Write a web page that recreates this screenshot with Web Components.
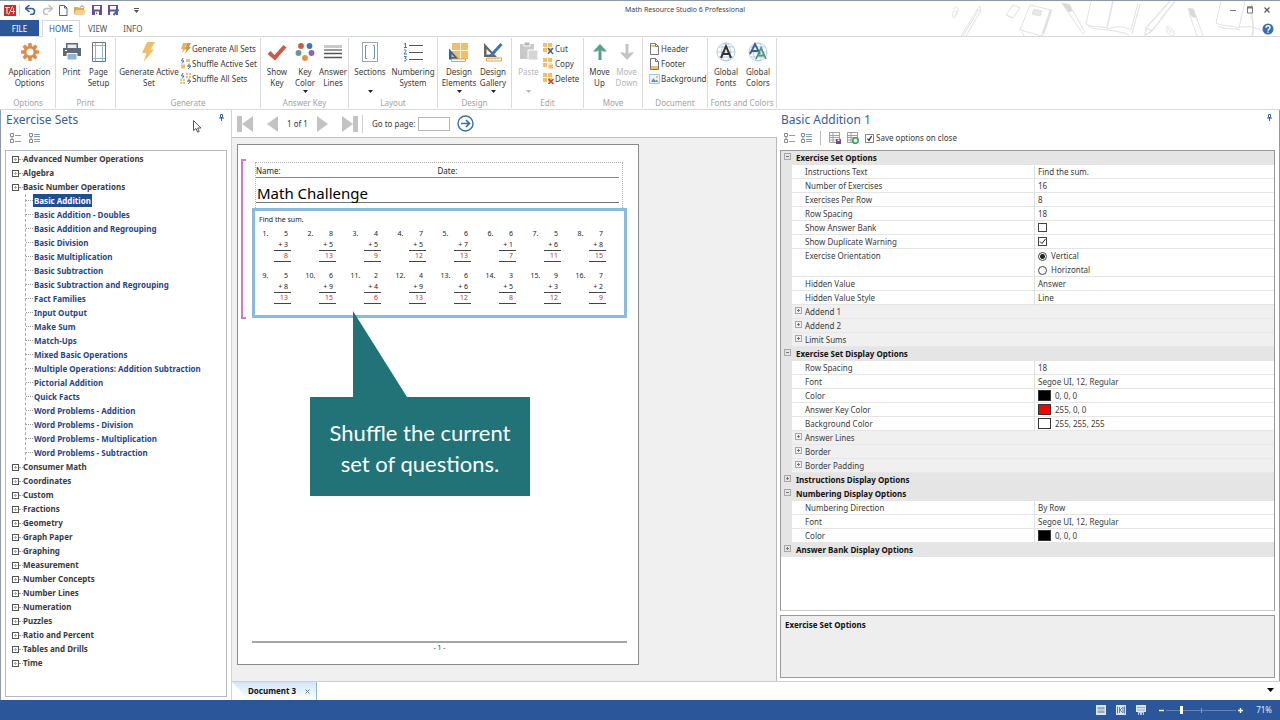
<!DOCTYPE html>
<html lang="en">
<head>
<meta charset="utf-8">
<meta name="viewport" content="width=device-width, initial-scale=1">
<title>Math Resource Studio 6 Professional</title>
<style>
  html, body { margin: 0; height: 100%; }
  body { font: 8px/14px "Noto Sans", "Open Sans", sans-serif; color: #3b3b3b; background: #fff; }
</style>
</head>
<body>
<studio-app></studio-app>

<script>
/* ---------- icons: [width, height, svg content] ---------- */
const DOC = '<path d="M1.5.5h5l3 3v8h-8z" fill="#fff" stroke="#777"/><path d="M6.5.5v3h3" fill="none" stroke="#777"/>';
const TOOTH = Array.from({ length: 8 }, (_, i) =>
  `<path d="M8.500 1h3l.6 4h-4.200z" transform="rotate(${i * 45} 10 10)"/>`).join('');
const BOLT = '<path d="M8 0h8l-4.500 7.500H15L4.500 20 7.500 11H3z" fill="#f0bd6a"/>';
const GLOBE = '<g fill="none" stroke="#b4cbe4"><circle cx="10" cy="10" r="9"/><ellipse cx="10" cy="10" rx="4.500" ry="9"/><path d="M1 10h18M3 5h14M3 15h14"/></g>';
const SQ4 = '<path d="M0 0h4v4H0zM5 0h4v4H5zM0 5h4v4H0zM5 5h4v4H5z" fill="#efc069"/>';
const LISTBOX = '<path d="M.5.5h3v3h-3zM.5 6.500h3v3h-3z" fill="#fff" stroke="#8a8a8a"/><path d="M2 3.500v3" stroke="#8a8a8a"/>';
const ICONS = {
  logo: [12, 11, '<path d="M0 0h12v11H0z" fill="#c62f2b"/><path d="M1 2.500h5M3 2.500V9M8.500 1.500L4.500 9.500M7 6.500h4M9.500 3v6" stroke="#fff" fill="none"/>'],
  undo: [11, 10, '<path d="M1 3.500h5.500a3 3 0 0 1 0 6H5" fill="none" stroke="#2f5f9e" stroke-width="1.600"/><path d="M4.500 0L.500 3.500 4.500 7" fill="none" stroke="#2f5f9e" stroke-width="1.600"/>'],
  redo: [11, 10, '<path d="M10 3.500H4.500a3 3 0 0 0 0 6H6" fill="none" stroke="#bdbdbd" stroke-width="1.400"/><path d="M6.500 0l4 3.500-4 3.500" fill="none" stroke="#bdbdbd" stroke-width="1.400"/>'],
  newdoc: [9, 11, '<path d="M.5.5h5l2.500 2.500v7.500H.5z" fill="#fff" stroke="#666"/><path d="M5.500.5V3H8" fill="none" stroke="#666"/>'],
  open: [12, 10, '<path d="M0 2h4l1 1h5v6H0z" fill="#e3a94c"/><path d="M2 5h10l-2 5H0z" fill="#f5cf8c"/><path d="M6 2.500c1-2 3-2 4 0" stroke="#3f76b5" fill="none"/>'],
  save: [10, 10, '<path d="M0 0h10v10H0z" fill="#6d4c8f"/><path d="M2 1h6v3.500H2zM3 6.500h4V10H3z" fill="#fff"/><path d="M4 7.500h1V9H4z" fill="#6d4c8f"/>'],
  saveas: [12, 11, '<path d="M0 0h10v10H0z" fill="#6d4c8f"/><path d="M2 1h6v3.500H2zM2 6.500h6V10H2z" fill="#fff"/><path d="M10.500 4.500L5.500 10" stroke="#2f6db5" stroke-width="2"/>'],
  more: [5, 5, '<path d="M0 .5h5" stroke="#555"/><path d="M0 2h5L2.500 5z" fill="#555"/>'],
  down: [5, 3, '<path d="M0 0h5L2.500 3z" fill="currentColor"/>'],
  menu: [7, 4, '<path d="M0 0h7L3.500 4z" fill="#000"/>'],
  min: [6, 10, '<path d="M0 5.500h6" stroke="#777"/>'],
  max: [6, 10, '<path d="M.5 2h5v6h-5z" fill="#fff" stroke="#777"/><path d="M0 2.500h6" stroke="#777" stroke-width="2"/>'],
  close: [6, 10, '<path d="M.5 2.500l5 5M5.500 2.500l-5 5" stroke="#555" stroke-width="1.200"/>'],
  help: [12, 12, '<circle cx="6" cy="6" r="5.500" fill="#3a6fae"/><path d="M4 4.700c0-2.600 4-2.600 4 0 0 1.500-2 1.300-2 3M6 8.600v1.200" fill="none" stroke="#fff" stroke-width="1.300"/>'],
  gear: [20, 20, `<g fill="#e18a4b">${TOOTH}</g><circle cx="10" cy="10" r="4.800" fill="#fff" stroke="#e18a4b" stroke-width="2.600"/>`],
  print: [20, 20, '<path d="M4 1h12v6H4z" fill="#5f6a75"/><path d="M5.500 2.500h9V7h-9z" fill="#e8edf2"/><path d="M1 6h18v8h-4v-3H5v3H1z" fill="#5f6a75"/><path d="M5 11.500h10V18H5z" fill="#8fb2d8" stroke="#fff"/><path d="M3 8.500h2" stroke="#fff"/>'],
  pagesetup: [20, 20, '<path d="M3.500.5h13v19h-13z" fill="#fff" stroke="#6b7178"/><path d="M6.500 1v18M13.500 1v18M4 3.500h12M4 16.500h12" stroke="#8fb2d2" fill="none"/>'],
  bolt: [20, 20, BOLT],
  boltall: [11, 11, '<path d="M3 0h4L5 4h2L2 10l1-4H1z" fill="#efb04e"/><path d="M7 0h4L9 4h2L5 11l1.500-4.500H5z" fill="#c99552"/>'],
  shuffle: [11, 11, '<path d="M6 1h4v3H6zM1 6.500h4v4H1z" fill="#efc069"/><path d="M3 0L1.500 3H4L2 5.500M9 5.500v3M7 8h4L8 11" stroke="#2f6db5" fill="none"/>'],
  shuffleall: [11, 11, '<path d="M6 0h2v2H6zM9 0h2v2H9zM6 3h2v2H6zM9 3h2v2H9zM0 6h2v2H0zM3 6h2v2H3zM0 9h2v2H0zM3 9h2v2H3z" fill="#efc069"/><path d="M3 0L1.500 3H4L2 5.500M9 5.500v3M7 8h4L8 11" stroke="#2f6db5" fill="none"/>'],
  check: [20, 20, '<path d="M.5 12L3.500 9l4 4L16.500 3 19.500 5.500 8 18.500z" fill="#cf5a43"/>'],
  keycolor: [20, 20, '<circle cx="6" cy="4" r="2.900" fill="#cf5a43"/><circle cx="14.500" cy="4" r="2.900" fill="#3f76b5"/><circle cx="3.500" cy="11" r="2.900" fill="#5d9e8a"/><circle cx="16.500" cy="11" r="2.900" fill="#8a63b5"/><circle cx="10" cy="16" r="2.900" fill="#e5903f"/>'],
  lines: [20, 20, '<path d="M1 4.500h18" stroke="#c9c9c9" stroke-width="3"/><path d="M1 8h18" stroke="#999" stroke-width="2"/><path d="M1 11.500h18M1 15.500h18" stroke="#555" stroke-width="1.600"/>'],
  sections: [20, 20, '<path d="M2.500.5h15v19h-15z" fill="#fff" stroke="#9aa3ab"/><path d="M7 3.500H5.500v13H7M13 3.500h1.500v13H13" stroke="#6a8fb5" fill="none"/>'],
  numbering: [20, 20, '<path d="M6 3.500h14M6 10.500h14M6 17.500h14" stroke="#555"/><path d="M1 2.500L2.500 1v4.500M1 5.500h3M.800 8.500c1-1.500 3-.5 2 .8L1 12h3M1 14.500h2.500L2 16.500c2.500 0 2 2.800-1 2.500" stroke="#3f76b5" fill="none"/>'],
  design: [20, 20, '<path d="M3 1h16v16H3z" fill="#efc069"/><path d="M11.500 1v16M3 8.500h16" stroke="#fff6df"/><path d="M0 6.500v11h10z" fill="#35629c"/><path d="M2.500 12v3H5.500z" fill="#efc069"/><path d="M2.500 17h14v2.500h-14z" fill="#fff" stroke="#e0a050"/>'],
  gallery: [20, 20, '<path d="M1 1v14h13z" fill="#666"/><path d="M3.500 7v5.500H9z" fill="#fff"/><path d="M18.500 2L8 13.500" stroke="#3f76b5" stroke-width="3"/><path d="M3.500 16h15v3h-15z" fill="#fff" stroke="#e0a050"/><path d="M6 16v1.500M9 16v1.500M12 16v1.500M15 16v1.500" stroke="#e0a050"/>'],
  paste: [20, 20, '<path d="M1 2h14v15H1z" fill="#c9c9c9"/><path d="M5 0h6v4H5z" fill="#b5b5b5" stroke="#fff"/><path d="M9 8h10v10H9z" fill="#d5d5d5" stroke="#fff"/>'],
  cut: [11, 11, SQ4 + '<path d="M5 5l5 6M10 5l-5 6" stroke="#35629c" stroke-width="1.300"/>'],
  copy: [11, 11, SQ4 + '<path d="M5 6h5.500v5H5z" fill="#efc069" stroke="#fff"/>'],
  del: [11, 11, SQ4 + '<path d="M5.500 6l5 5M10.500 6l-5 5" stroke="#c8442f" stroke-width="1.500"/>'],
  up: [20, 20, '<path d="M10 2l7 7.500h-4L11.500 8v10h-3V8L7 9.500H3z" fill="#5d9e8a"/>'],
  downbig: [20, 20, '<path d="M10 18l7-7.500h-4L11.500 12V2h-3v10L7 10.500H3z" fill="#c4c4c4"/>'],
  header: [11, 12, DOC + '<path d="M2 2h4v2H2z" fill="#efc069"/>'],
  footer: [11, 12, DOC + '<path d="M2 8h7v3H2z" fill="#efc069"/>'],
  background: [11, 12, '<path d="M.5 1.500h10v9H.5z" fill="#eef4fa" stroke="#a9c4e2"/><path d="M2 9l2.500-4L7 9z" fill="#5f8fc0"/><path d="M5.500 9l2-2.500L9.500 9z" fill="#5d9e8a"/><circle cx="8" cy="4" r="1" fill="#efb04e"/>'],
  fonts: [20, 20, GLOBE + '<path d="M5 16L10 4l5 12M7 12h6" fill="none" stroke="#333" stroke-width="2"/>'],
  colors: [20, 20, GLOBE + '<path d="M2 12L7 2l5 10M4 9h6" fill="none" stroke="#35629c" stroke-width="1.800"/><path d="M8 17l5-11 5 11M10 13.500h6" fill="none" stroke="#4f9a78" stroke-width="1.800"/>'],
  collapse: [12, 11, LISTBOX + '<path d="M5 2.500h6M5 8.500h6" stroke="#7d9fc0"/>'],
  expand: [12, 11, LISTBOX + '<path d="M5 1.500h6M5 3.500h6M5 6.500h6M5 8.500h6" stroke="#7d9fc0"/>'],
  gridsave: [12, 12, '<path d="M.5.5h10v10H.5zM.5 3.500h10M.5 5.500h10M.5 8h10M4 .5v10" fill="none" stroke="#a0a0a0"/><path d="M7 7h5v5H7z" fill="#6d4c8f"/><path d="M8.500 7.500h2v1.500h-2z" fill="#fff"/>'],
  gridreset: [12, 12, '<path d="M.5.5h10v10H.5zM.5 3.500h10M.5 5.500h10M.5 8h10M4 .5v10" fill="none" stroke="#a0a0a0"/><circle cx="8.500" cy="8.500" r="2.800" fill="#dff0e6" stroke="#3f9a63" stroke-width="1.500"/>'],
  pin: [5, 7, '<path d="M1.500.5h2v3h-2zM0 4h5M2.500 4v3" fill="none" stroke="#35629c"/>'],
  first: [16, 16, '<path d="M0 0h5v16H0zM16 0v16L5 8z" fill="#c3c3c3"/>'],
  prev: [11, 16, '<path d="M11 0v16L0 8z" fill="#c3c3c3"/>'],
  next: [11, 16, '<path d="M0 0v16l11-8z" fill="#c3c3c3"/>'],
  last: [16, 16, '<path d="M11 0h5v16h-5zM0 0v16l11-8z" fill="#c3c3c3"/>'],
  go: [17, 17, '<circle cx="8.500" cy="8.500" r="7.500" fill="#fff" stroke="#3a6fae" stroke-width="1.400"/><path d="M4 8.500h8.500M9 5l3.500 3.500L9 12" fill="none" stroke="#3a6fae" stroke-width="1.700"/>'],
  tabx: [5, 5, '<path d="M.5.5l4 4M4.500.5l-4 4" stroke="#5f7b96"/>'],
  view1: [10, 10, '<path d="M0 0h10v10H0z" fill="#dce6f2"/><path d="M1.500 2h7v2.500h-7zM1.500 5.500h7V8h-7z" fill="#8ea9cb"/>'],
  view2: [10, 10, '<path d="M0 0h10v10H0z" fill="#dce6f2"/><path d="M1.500 1.500v7M8.500 1.500v7M3.500 2v6M4 5l3-3v6z" stroke="#5f82b2" fill="none"/>'],
  view3: [10, 10, '<path d="M0 0h10v7H0z" fill="#dce6f2"/><path d="M1 2.500h8M1 5h8" stroke="#8ea9cb"/><path d="M2 7h6v3H2z" fill="#b9c9de"/><path d="M3.500 8v2M6.500 8v2" stroke="#2b579a"/>'],
  minus: [7, 7, '<path d="M1 3.500h5" stroke="#fff" stroke-width="1.400"/>'],
  plus: [7, 7, '<path d="M1 3.500h5M3.500 1v5" stroke="#fff" stroke-width="1.400"/>'],
  cursor: [9, 13, '<path d="M.5.5v10l2.500-2 1.600 3.700 1.600-.7-1.600-3.500H8z" fill="#fff" stroke="#555"/>'],
  pencils: [330, 35, `<g fill="none" stroke="#e2e2e2">
    <path d="M4 8c2-3 5-1 4 2s-3 9-5 6 2-8 3-6-1 5-1 5"/>
    <path d="M11 35L27 9l3-4 .5 5L16 35M13 35L28 10M27 9l4 1"/>
    <path d="M56 14l7-10 7 3-7 10zM56 14l7 3"/>
    <path d="M80 4l21 5-9 26-22-6zM72 31l2 4"/><path d="M84 8l8 2-2 5-8-2z" fill="#e8e8e8"/><path d="M93 33l8-24" stroke-width="2.500"/>
    <path d="M113 3l6 0 16 28-2 2-15-22z"/><path d="M112 2l8 2 2 6-4 1z" fill="#d8d8d8"/>
    <path d="M141 0l-5 23c8 5 18 1 22 5 8-4 18-2 23 1l7-27M138 25c6 4 14 3 20 4s15 2 21 5M190 3l-8 30"/><path d="M157 27L163 0" stroke-width="1.500"/>
    <path d="M220 0l-24 27-1 7 7-4 23-30M196 27l6 3" stroke-width="1.300"/>
    <path d="M216 26c5-2 9 6 8 8s-5 1-7-4 4-2 4 2"/>
    <path d="M238 8l5-1 10 28M239 12l8 23"/><path d="M238 7l6 2 2 8-5-2z" fill="#d8d8d8"/>
    <path d="M271 0l-5 22c8 4 16 2 22 5 8-3 18-1 25 3M289 27l6-27M268 25c8 4 15 2 22 4"/><path d="M302 3c-3 10 4 20 0 32" stroke-width="1.500"/></g>`],
};

/* ---------- base class ---------- */
class Base extends HTMLElement {
  constructor() { super(); this.attachShadow({ mode: 'open' }); }
  connectedCallback() {
    this.shadowRoot.innerHTML = `<style>
      *, *::before, *::after { box-sizing: border-box; }
      button { font: inherit; color: inherit; background: none; border: 0; padding: 0; margin: 0; }
      ${this.css()}</style>${this.html()}`;
  }
  css() { return ''; }
  html() { return '<slot></slot>'; }
}
const icon = name => `<ui-icon name="${name}"></ui-icon>`;

customElements.define('ui-icon', class extends Base {
  css() { return ':host{display:block;flex:none} svg{display:block}'; }
  html() {
    const [w, h, body] = ICONS[this.getAttribute('name')];
    return `<svg width="${w}" height="${h}" viewBox="0 0 ${w} ${h}" aria-hidden="true">${body}</svg>`;
  }
});

/* ---------- title bar and ribbon tabs ---------- */
customElements.define('title-bar', class extends Base {
  css() { return `
    :host { display: flex; align-items: center; height: 20px; padding: 0 10px 0 4px; }
    .quick { display: flex; align-items: center; width: 136px; gap: 6px; }
    .quick i { width: 1px; height: 10px; background: #ccc; margin: 0 -1px 0 -3px; }
    .quick .more { margin-left: 8px; }
    h1 { flex: 1; margin: 0; text-align: center; font-size: 7px; font-weight: 400; color: #444; }
    .win { display: flex; gap: 11px; }`; }
  html() { return `
    <div class="quick">${icon('logo')}<i></i>
      ${['undo:Undo', 'redo:Redo', 'newdoc:New', 'open:Open', 'save:Save', 'saveas:Save As'].map(s => {
        const [n, t] = s.split(':'); return `<button aria-label="${t}">${icon(n)}</button>`; }).join('')}
      <button class="more" aria-label="Customize">${icon('more')}</button></div>
    <h1>Math Resource Studio 6 Professional</h1>
    <div class="win"><button aria-label="Minimize">${icon('min')}</button><button aria-label="Maximize">${icon('max')}</button><button aria-label="Close">${icon('close')}</button></div>`; }
});

customElements.define('ribbon-tabs', class extends Base {
  css() { return `
    :host { display: flex; align-items: stretch; height: 17px; border-bottom: 1px solid #d5d8dc; padding-right: 6px; }
    button { padding: 0 8px; color: #555; height: 17px; line-height: 17px; }
    .file { background: #2b579a; color: #fff; width: 39px; margin-right: 3px; height: 16px; }
    .on { background: #fff; color: #2b579a; border: 1px solid #d5d8dc; border-bottom: 0; padding: 0 6px; line-height: 16px; }
    .help { margin-left: auto; padding: 2px 0; }`; }
  html() { return `
    <button class="file">FILE</button>
    <button class="on" aria-current="page">HOME</button>
    <button>VIEW</button>
    <button>INFO</button>
    <button class="help" aria-label="Help">${icon('help')}</button>`; }
});

/* ---------- ribbon ---------- */
customElements.define('ribbon-group', class extends Base {
  css() { return `
    :host { display: flex; flex-direction: column; flex: none; width: var(--w); height: 70px; border-right: 1px solid #d9dbde; }
    .items { display: flex; flex: 1; padding-left: var(--pad, 2px); }
    .name { text-align: center; line-height: 10px; color: #a3a3a3; white-space: nowrap; }
    ::slotted(div) { display: flex; flex-direction: column; padding-top: 3px; }`; }
  html() { return `<div class="items"><slot></slot></div><div class="name">${this.getAttribute('name')}</div>`; }
});

customElements.define('ribbon-button', class extends Base {
  css() { return `
    :host { display: block; flex: none; width: var(--bw, 27px); }
    button { display: flex; flex-direction: column; align-items: center; width: 100%; height: 58px; padding-top: 4px; }
    button:disabled { color: #b5b5b5; }
    .text { margin-top: 4px; line-height: 11px; height: 22px; text-align: center; white-space: pre; }
    .arrow { margin-top: 2px; color: #222; }
    button:disabled .arrow { color: #b5b5b5; }`; }
  html() { return `<button ${this.hasAttribute('off') ? 'disabled' : ''}>${icon(this.getAttribute('icon'))}
    <span class="text"><slot></slot></span>${this.hasAttribute('menu') ? `<span class="arrow">${icon('down')}</span>` : ''}</button>`; }
});

customElements.define('ribbon-item', class extends Base {
  css() { return `
    :host { display: block; }
    button { display: flex; align-items: center; gap: 1px; height: 15px; white-space: nowrap; }`; }
  html() { return `<button>${icon(this.getAttribute('icon'))}<slot></slot></button>`; }
});

customElements.define('app-ribbon', class extends Base {
  css() { return `
    :host { display: flex; height: 73px; padding: 1px 0 1px 1px; border-bottom: 1px solid #d5d8dc; background: #fff; box-sizing: border-box; }`; }
  html() { return `
    <ribbon-group name="Options" style="--w:55px"><ribbon-button icon="gear" style="--bw:53px">Application\nOptions</ribbon-button></ribbon-group>
    <ribbon-group name="Print" style="--w:60px"><ribbon-button icon="print">Print</ribbon-button><ribbon-button icon="pagesetup">Page\nSetup</ribbon-button></ribbon-group>
    <ribbon-group name="Generate" style="--w:145px"><ribbon-button icon="bolt" style="--bw:62px">Generate Active\nSet</ribbon-button>
      <div><ribbon-item icon="boltall">Generate All Sets</ribbon-item><ribbon-item icon="shuffle">Shuffle Active Set</ribbon-item><ribbon-item icon="shuffleall">Shuffle All Sets</ribbon-item></div></ribbon-group>
    <ribbon-group name="Answer Key" style="--w:88px"><ribbon-button icon="check" style="--bw:28px">Show\nKey</ribbon-button><ribbon-button icon="keycolor" menu style="--bw:28px">Key\nColor</ribbon-button><ribbon-button icon="lines" style="--bw:28px">Answer\nLines</ribbon-button></ribbon-group>
    <ribbon-group name="Layout" style="--w:89px"><ribbon-button icon="sections" menu style="--bw:38px">Sections</ribbon-button><ribbon-button icon="numbering" style="--bw:48px">Numbering\nSystem</ribbon-button></ribbon-group>
    <ribbon-group name="Design" style="--w:74px;--pad:4px"><ribbon-button icon="design" menu style="--bw:34px">Design\nElements</ribbon-button><ribbon-button icon="gallery" menu style="--bw:34px">Design\nGallery</ribbon-button></ribbon-group>
    <ribbon-group name="Edit" style="--w:72px"><ribbon-button icon="paste" off menu style="--bw:29px">Paste</ribbon-button>
      <div><ribbon-item icon="cut">Cut</ribbon-item><ribbon-item icon="copy">Copy</ribbon-item><ribbon-item icon="del">Delete</ribbon-item></div></ribbon-group>
    <ribbon-group name="Move" style="--w:59px"><ribbon-button icon="up">Move\nUp</ribbon-button><ribbon-button icon="downbig" off>Move\nDown</ribbon-button></ribbon-group>
    <ribbon-group name="Document" style="--w:65px;--pad:6px"><div><ribbon-item icon="header">Header</ribbon-item><ribbon-item icon="footer">Footer</ribbon-item><ribbon-item icon="background">Background</ribbon-item></div></ribbon-group>
    <ribbon-group name="Fonts and Colors" style="--w:69px"><ribbon-button icon="fonts" style="--bw:32px">Global\nFonts</ribbon-button><ribbon-button icon="colors" style="--bw:32px">Global\nColors</ribbon-button></ribbon-group>`; }
});

/* ---------- panel heading shared by both side panels ---------- */
customElements.define('panel-head', class extends Base {
  css() { return `
    :host { display: flex; justify-content: space-between; height: 19px; padding: 4px 3px 0 1px; }
    h2 { margin: 0; font-size: 12px; line-height: 12px; font-weight: 400; color: #3a6096; }
    button { height: 7px; }`; }
  html() { return `<h2><slot></slot></h2><button aria-label="Pin">${icon('pin')}</button>`; }
});

/* ---------- exercise tree ---------- */
const TREE = [['Advanced Number Operations'], ['Algebra'], ['Basic Number Operations', [
  'Basic Addition', 'Basic Addition - Doubles', 'Basic Addition and Regrouping', 'Basic Division',
  'Basic Multiplication', 'Basic Subtraction', 'Basic Subtraction and Regrouping', 'Fact Families',
  'Input Output', 'Make Sum', 'Match-Ups', 'Mixed Basic Operations',
  'Multiple Operations: Addition Subtraction', 'Pictorial Addition', 'Quick Facts',
  'Word Problems - Addition', 'Word Problems - Division', 'Word Problems - Multiplication',
  'Word Problems - Subtraction']], ['Consumer Math'], ['Coordinates'], ['Custom'], ['Fractions'],
  ['Geometry'], ['Graph Paper'], ['Graphing'], ['Measurement'], ['Number Concepts'], ['Number Lines'],
  ['Numeration'], ['Puzzles'], ['Ratio and Percent'], ['Tables and Drills'], ['Time']];

customElements.define('exercise-tree', class extends Base {
  css() { return `
    :host { display: block; border: 1px solid #b5b8bc; background: #fff; padding: 1px 0 0 6px; overflow: auto; font-weight: 700; }
    ul { list-style: none; margin: 0; padding: 0; }
    .root { display: flex; align-items: center; height: 14px; }
    .box { width: 7px; height: 7px; border: 1px solid #555; background: linear-gradient(#aaa, #aaa) center/3px 1px no-repeat, linear-gradient(#aaa, #aaa) center/1px 3px no-repeat; }
    .dots { width: 4px; border-top: 1px dotted #999; }
    .root span:last-child { white-space: nowrap; }
    .kids { margin-left: 13px; border-left: 1px dashed #aaa; color: #1f4787; }
    .kids li { display: flex; align-items: flex-start; height: 14px; white-space: nowrap; }
    .kids li::before { content: ""; width: 7px; margin-top: 6px; border-top: 1px dotted #999; }
    .kids span { padding: 0 1px; line-height: 13px; }
    .on span { background: #1f4e92; color: #fff; }`; }
  html() { return `<ul role="tree">${TREE.map(([t, kids]) => `<li role="treeitem">
    <div class="root"><span class="box"></span><span class="dots"></span><span>${t}</span></div>
    ${kids ? `<ul class="kids" role="group">${kids.map((k, i) => `<li role="treeitem"${i ? '' : ' class="on" aria-selected="true"'}><span>${k}</span></li>`).join('')}</ul>` : ''}</li>`).join('')}</ul>`; }
});

customElements.define('exercise-panel', class extends Base {
  css() { return `
    :host { display: flex; flex-direction: column; border-left: 1px solid #8d9aab; border-right: 1px solid #d0d3d6; padding: 0 4px 3px; background: #fff; position: relative; }
    .tools { display: flex; gap: 7px; align-items: center; height: 21px; padding: 0 0 3px 5px; }
    exercise-tree { flex: 1; min-height: 0; }
    .pointer { position: absolute; left: 192px; top: 10px; }`; }
  html() { return `<panel-head>Exercise Sets</panel-head>
    <div class="tools"><button aria-label="Collapse all">${icon('collapse')}</button><button aria-label="Expand all">${icon('expand')}</button></div>
    <exercise-tree></exercise-tree><div class="pointer">${icon('cursor')}</div>`; }
});

/* ---------- document area ---------- */
customElements.define('page-nav', class extends Base {
  css() { return `
    :host { display: flex; align-items: center; height: 28px; border-bottom: 1px solid #bfc2c5; padding-left: 5px; background: #fff; }
    button { flex: none; }
    .prev { margin: 0 9px 0 14px; } .next { margin: 0 14px 0 9px; }
    .bar { width: 1px; height: 18px; background: #d0d0d0; margin: 0 9px 0 4px; }
    input { width: 32px; height: 14px; border: 1px solid #b5b5b5; padding: 0 2px; margin: 0 7px 0 3px; font: inherit; }`; }
  html() { return `
    <button aria-label="First page">${icon('first')}</button>
    <button class="prev" aria-label="Previous page">${icon('prev')}</button>
    <span>1 of 1</span>
    <button class="next" aria-label="Next page">${icon('next')}</button>
    <button aria-label="Last page">${icon('last')}</button><span class="bar"></span>
    <label for="goto">Go to page:</label><input id="goto" type="text">
    <button aria-label="Go">${icon('go')}</button>`; }
});

customElements.define('math-problem', class extends Base {
  css() { return `
    :host { display: flex; gap: 2px; line-height: 11px; color: #222; }
    .n { width: 13px; text-align: center; }
    .work { width: 17px; text-align: right; }
    .work div { padding-right: 3px; }
    .ans { color: #d8222f; border-top: 1px solid #444; border-bottom: 1px solid #444; height: 12px; line-height: 10px; }`; }
  html() {
    const [n, a, b] = ['n', 'a', 'b'].map(k => +this.getAttribute(k));
    return `<span class="n">${n}.</span><div class="work"><div>${a}</div><div>+ ${b}</div><div class="ans">${a + b}</div></div>`;
  }
});

const SUMS = [[5,3],[8,5],[4,5],[7,5],[6,7],[6,1],[5,6],[7,8],[5,8],[6,9],[2,4],[4,9],[6,6],[3,5],[9,3],[7,2]];
customElements.define('work-sheet', class extends Base {
  css() { return `
    :host { display: flex; flex-direction: column; width: 402px; height: 521px; border: 1px solid #8a8a8a; background: #fff; padding: 14px 11px 12px 3px; font-size: 7px; box-sizing: border-box; }
    .section { display: flex; gap: 6px; height: 160px; }
    .bracket { width: 5px; border: 2px solid #cf7cc4; border-right: 0; }
    .body { flex: 1; padding-top: 3px; }
    .head { margin: 0 4px 0 3px; border: 1px dotted #b0b0b0; border-bottom: 0; height: 46px; padding-right: 3px; color: #222; }
    .fields { display: grid; grid-template-columns: 1fr 1fr; height: 15px; line-height: 16px; border-bottom: 1px solid #888; font-size: 8px; }
    h3 { margin: 0; height: 25px; font-size: 15px; line-height: 30px; font-weight: 400; color: #000; padding-left: 1px; border-bottom: 1px solid #777; }
    .set { border: 3px solid #8abbdf; height: 110px; padding: 2px 4px 0; }
    .set p { margin: 0; line-height: 14px; color: #222; }
    .sums { display: grid; grid-template-columns: repeat(8, 45px); row-gap: 8px; padding-top: 1px; }
    footer { margin: auto 0 0 11px; border-top: 2px solid #a5a5a5; text-align: center; line-height: 9px; }`; }
  html() { return `
    <div class="section"><div class="bracket"></div><div class="body">
      <div class="head"><div class="fields"><span>Name:</span><span>Date:</span></div><h3>Math Challenge</h3></div>
      <div class="set"><p>Find the sum.</p><div class="sums">${SUMS.map(([a, b], i) => `<math-problem n="${i + 1}" a="${a}" b="${b}"></math-problem>`).join('')}</div></div>
    </div></div>
    <footer>- 1 -</footer>`; }
});

customElements.define('callout-bubble', class extends Base {
  css() { return `
    :host { position: absolute; left: 78px; top: 259px; width: 220px; padding: 20px 10px 17px; background: #217377; color: #fff; font: 22px/31px Lato, sans-serif; text-align: center; box-sizing: border-box; }
    svg { position: absolute; left: 43px; bottom: 100%; display: block; }`; }
  html() { return `<svg width="54" height="86" viewBox="0 0 54 86" aria-hidden="true"><path d="M0 0v86h54z" fill="#217377"/></svg><slot></slot>`; }
});

customElements.define('document-view', class extends Base {
  css() { return `
    :host { display: flex; flex-direction: column; min-width: 0; }
    .canvas { flex: 1; background: #f0f0f0; padding: 6px 5px; border-right: 1px solid #b5b8bc; position: relative; overflow: hidden; }`; }
  html() { return `<page-nav></page-nav><div class="canvas"><work-sheet></work-sheet>
    <callout-bubble>Shuffle the current<br>set of questions.</callout-bubble></div>`; }
});

customElements.define('document-tabs', class extends Base {
  css() { return `
    :host { display: flex; justify-content: space-between; align-items: flex-start; height: 19px; border-top: 1px solid #bcd6da; background: #fff; padding-right: 6px; box-sizing: border-box; }
    .tab { display: flex; align-items: center; gap: 9px; width: 85px; height: 18px; padding-left: 16px; font-weight: 700; color: #111; border-right: 1px solid #8fb3d9; background: linear-gradient(#d3e5f8, #fff); clip-path: polygon(0 0, 100% 0, 100% 100%, 17px 100%); white-space: nowrap; }
    .menu { padding-top: 6px; }`; }
  html() { return `<div class="tab"><span>Document 3</span><button aria-label="Close Document 3">${icon('tabx')}</button></div>
    <button class="menu" aria-label="Documents">${icon('menu')}</button>`; }
});

/* ---------- option panel ---------- */
const swatch = (c, t) => `<i class="sw" style="background:${c}"></i>${t}`;
const GRID = [
  ['h', 'Exercise Set Options', '-'], ['r', 'Instructions Text', 'Find the sum.'], ['r', 'Number of Exercises', '16'],
  ['r', 'Exercises Per Row', '8'], ['r', 'Row Spacing', '18'],
  ['r', 'Show Answer Bank', '<input type="checkbox" aria-label="Show Answer Bank">'],
  ['r', 'Show Duplicate Warning', '<input type="checkbox" checked aria-label="Show Duplicate Warning">'],
  ['r', 'Exercise Orientation', '<label><input type="radio" name="o" checked>Vertical</label><label><input type="radio" name="o">Horizontal</label>'],
  ['r', 'Hidden Value', 'Answer'], ['r', 'Hidden Value Style', 'Line'],
  ['s', 'Addend 1'], ['s', 'Addend 2'], ['s', 'Limit Sums'],
  ['h', 'Exercise Set Display Options', '-'], ['r', 'Row Spacing', '18'], ['r', 'Font', 'Segoe UI, 12, Regular'],
  ['r', 'Color', swatch('#000', '0, 0, 0')], ['r', 'Answer Key Color', swatch('#f00', '255, 0, 0')],
  ['r', 'Background Color', swatch('#fff', '255, 255, 255')],
  ['s', 'Answer Lines'], ['s', 'Border'], ['s', 'Border Padding'],
  ['h', 'Instructions Display Options', '+'], ['h', 'Numbering Display Options', '-'],
  ['r', 'Numbering Direction', 'By Row'], ['r', 'Font', 'Segoe UI, 12, Regular'], ['r', 'Color', swatch('#000', '0, 0, 0')],
  ['h', 'Answer Bank Display Options', '+']];

customElements.define('property-grid', class extends Base {
  css() { return `
    :host { display: block; border: 1px solid #999; border-bottom-color: #ccc; background: #fff; overflow: auto; }
    table { width: 100%; border-collapse: separate; border-spacing: 0; table-layout: fixed; }
    col.g { width: 11px; } col.k { width: 242px; }
    th, td { padding: 0; height: 14px; line-height: 14px; text-align: left; font-weight: 400; vertical-align: top; white-space: nowrap; }
    .g { background: #e5e5e5; padding: 2px 0 0 3px; }
    .h th, .h .g { background: #e5e5e5; }
    .h th { font-weight: 700; color: #111; padding-left: 4px; }
    .r th, .r td:last-child { background: linear-gradient(#e5e5e5, #e5e5e5) bottom/100% 1px no-repeat; }
    .r th { padding-left: 13px; }
    .r td:last-child { border-left: 1px solid #e0e0e0; padding-left: 3px; }
    .s th { background: linear-gradient(#e8e8e8, #e8e8e8) bottom/100% 1px no-repeat #f0f0f0; }
    .s div { display: flex; gap: 4px; padding: 0 0 0 3px; }
    .x { display: block; flex: none; width: 7px; height: 7px; margin-top: 2px; border: 1px solid #a8a8a8;
      background: linear-gradient(#777, #777) center/3px 1px no-repeat; }
    .g .x { margin: 0; }
    .s div { gap: 3px; }
    .x.plus { background: linear-gradient(#777, #777) center/3px 1px no-repeat, linear-gradient(#777, #777) center/1px 3px no-repeat; }
    label { display: flex; align-items: center; height: 14px; gap: 4px; }
    input { appearance: none; display: block; width: 9px; height: 9px; margin: 2px 0 3px; border: 1px solid #444; background: #fff; }
    input[type=checkbox]:checked { background: #fff url("data:image/svg+xml,%3Csvg xmlns='http://www.w3.org/2000/svg' viewBox='0 0 7 7'%3E%3Cpath d='M1 3.500l2 2L6.500 1' fill='none' stroke='%23222'/%3E%3C/svg%3E") center/7px no-repeat; }
    input[type=radio] { border-radius: 50%; margin: 0; }
    input[type=radio]:checked { background: radial-gradient(#222 2px, #fff 3px); }
    .sw { display: inline-block; width: 13px; height: 11px; border: 1px solid #333; margin: 1px 4px 0 0; vertical-align: top; }`; }
  html() { return `<table><colgroup><col class="g"><col class="k"><col></colgroup><tbody>${GRID.map(([k, a, v]) =>
    k === 'h' ? `<tr class="h"><td class="g"><i class="x ${v === '+' ? 'plus' : ''}"></i></td><th colspan="2" scope="rowgroup">${a}</th></tr>`
    : k === 's' ? `<tr class="s"><td class="g"></td><th colspan="2" scope="row"><div><i class="x plus"></i>${a}</div></th></tr>`
    : `<tr class="r"><td class="g"></td><th scope="row">${a}</th><td>${v}</td></tr>`).join('')}</tbody></table>`; }
});

customElements.define('options-panel', class extends Base {
  css() { return `
    :host { display: flex; flex-direction: column; padding: 0 4px 3px 3px; border-right: 1px solid #8d9aab; background: #fff; }
    .tools { display: flex; align-items: center; height: 21px; padding: 0 0 3px 4px; }
    .tools button { margin-right: 5px; }
    .bar { width: 1px; height: 14px; background: #bbb; margin: 0 8px 0 2px; }
    .tools .grid { margin-right: 6px; }
    label { display: flex; align-items: center; gap: 2px; }
    input { appearance: none; width: 9px; height: 9px; margin: 0; border: 1px solid #888;
      background: url("data:image/svg+xml,%3Csvg xmlns='http://www.w3.org/2000/svg' viewBox='0 0 7 7'%3E%3Cpath d='M1.500 3.500l1.500 2L5.500 1' fill='none' stroke='%23222' stroke-width='1.200'/%3E%3C/svg%3E") center/7px no-repeat; }
    property-grid { flex: 1; min-height: 0; }
    .hint { height: 63px; margin-top: 4px; border: 1px solid #999; background: #eee; padding: 2px 4px; font-weight: 700; color: #111; }`; }
  html() { return `<panel-head>Basic Addition 1</panel-head>
    <div class="tools"><button aria-label="Collapse all">${icon('collapse')}</button><button aria-label="Expand all">${icon('expand')}</button><span class="bar"></span>
      <button class="grid" aria-label="Save options">${icon('gridsave')}</button><button class="grid" aria-label="Reset options">${icon('gridreset')}</button>
      <label><input type="checkbox" checked>Save options on close</label></div>
    <property-grid></property-grid><div class="hint">Exercise Set Options</div>`; }
});

/* ---------- status bar ---------- */
customElements.define('status-bar', class extends Base {
  css() { return `
    :host { display: flex; align-items: center; justify-content: flex-end; height: 20px; background: #2b579a; color: #e6edf6; padding-right: 8px; box-sizing: border-box; }
    .view { margin-right: 10px; }
    .zo { margin: 0 1px 0 12px; } .zi { margin: 0 12px 0 1px; }
    input { appearance: none; width: 70px; height: 10px; margin: 0; background:
      linear-gradient(#7d9ac6, #7d9ac6) center/1px 5px no-repeat, linear-gradient(#5f82b8, #5f82b8) center/100% 1px no-repeat; }
    input::-webkit-slider-thumb { appearance: none; width: 3px; height: 8px; background: #fff; }`; }
  html() { return `
    <button class="view" aria-label="Normal view">${icon('view1')}</button><button class="view" aria-label="Page view">${icon('view2')}</button><button aria-label="Presentation view">${icon('view3')}</button>
    <button class="zo" aria-label="Zoom out">${icon('minus')}</button><input type="range" min="0" max="100" value="20" aria-label="Zoom"><button class="zi" aria-label="Zoom in">${icon('plus')}</button><span>71%</span>`; }
});

/* ---------- application shell ---------- */
customElements.define('studio-app', class extends Base {
  css() { return `
    :host { display: flex; flex-direction: column; min-height: 100vh; border-top: 1px solid #8d9aab; box-sizing: border-box; }
    header { position: relative; margin-top: -1px; }
    .art { position: absolute; right: 0; top: 1px; z-index: -1; }
    main { flex: 1; display: grid; grid-template-columns: 232px minmax(0, 1fr) 503px; grid-template-rows: 1fr auto; }
    exercise-panel { grid-row: 1 / 3; }
    document-tabs { grid-column: 2 / 4; }`; }
  html() { return `
    <header><div class="art">${icon('pencils')}</div><title-bar></title-bar><ribbon-tabs></ribbon-tabs></header>
    <app-ribbon></app-ribbon>
    <main><exercise-panel></exercise-panel><document-view></document-view><options-panel></options-panel><document-tabs></document-tabs></main>
    <status-bar></status-bar>`; }
});
</script>
</body>
</html>
